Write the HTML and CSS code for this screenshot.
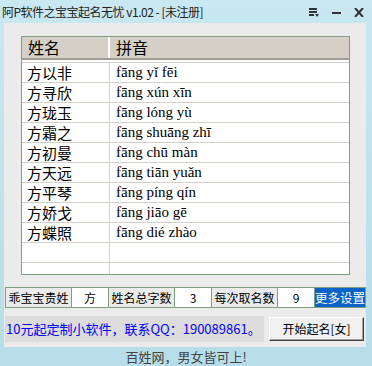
FILE: index.html
```html
<!DOCTYPE html>
<html lang="zh">
<head>
    <meta charset="UTF-8">
    <title>阿P软件之宝宝起名无忧</title>
    <link rel="stylesheet" href="styles.css">
</head>
<body>
    <div class="window">
        <div class="titlebar">
            <span class="title">阿P软件之宝宝起名无忧 v1.02 - [未注册]</span>
            <div class="controls">
                <svg width="10" height="9" viewBox="0 0 10 9"><path d="M0 1h8M0 4h8M0 7h5" stroke="#333" stroke-width="2"/><path d="M6 6h4l-2 3z" fill="#333"/></svg>
                <svg width="9" height="9" viewBox="0 0 9 9"><path d="M0 5h9" stroke="#333" stroke-width="2"/></svg>
                <svg width="10" height="9" viewBox="0 0 10 9"><path d="M1 0l8 9M9 0l-8 9" stroke="#333" stroke-width="2"/></svg>
            </div>
        </div>

        <div class="panel">
            <div class="list">
                <div class="list-head">
                    <div class="col-name">姓名</div>
                    <div class="col-py">拼音</div>
                </div>
                <div class="list-body" id="rows"></div>
            </div>

            <div class="fields">
                <div class="label">乖宝宝贵姓</div>
                <div class="value">方</div>
                <div class="label">姓名总字数</div>
                <div class="value">3</div>
                <div class="label">每次取名数</div>
                <div class="value">9</div>
                <div class="more">更多设置</div>
            </div>

            <div class="actions">
                <div class="ad">10元起定制小软件，联系QQ：190089861。</div>
                <button class="start">开始起名[女]</button>
            </div>
        </div>

        <div class="footer">百姓网，男女皆可上!</div>
    </div>

    <script>
        const names = [
            ["方以非", "fāng yǐ fēi"],
            ["方寻欣", "fāng xún xīn"],
            ["方珑玉", "fāng lóng yù"],
            ["方霜之", "fāng shuāng zhī"],
            ["方初曼", "fāng chū màn"],
            ["方天远", "fāng tiān yuǎn"],
            ["方平琴", "fāng píng qín"],
            ["方娇戈", "fāng jiāo gē"],
            ["方蝶照", "fāng dié zhào"],
            ["", ""],
            ["", ""]
        ];
        let html = "";
        names.forEach(n => {
            html += `<div class="row"><div class="col-name">${n[0]}</div><div class="col-py">${n[1]}</div></div>`;
        });
        document.getElementById("rows").innerHTML = html;
    </script>
</body>
</html>
```

FILE: styles.css
```css
body {
    margin: 0;
    font-family: "Noto Sans CJK SC", sans-serif;
}
.window {
    width: 372px;
    height: 366px;
    background: linear-gradient(#c9e8f1, #b6dde9);
    display: flex;
    flex-direction: column;
    overflow: hidden;
}
.titlebar {
    height: 23px;
    display: flex;
    align-items: center;
    justify-content: space-between;
    padding: 0 8px 0 2px;
}
.title {
    font-size: 12px;
    color: #222;
    letter-spacing: -0.5px;
    white-space: nowrap;
}
.controls {
    display: flex;
    gap: 13px;
    align-items: center;
    margin-top: 2px;
}
.panel {
    margin: 0 6px 0 4px;
    background-color: #ebebeb;
    height: 326px;
    padding: 13px 0 0 1px;
    box-sizing: border-box;
}
.list {
    margin-left: 16px;
    width: 329px;
    height: 239px;
    border: 1px solid #7f9f7f;
    box-sizing: border-box;
    background-color: #fff;
    overflow: hidden;
}
.list-head {
    display: flex;
    height: 23px;
    background-color: #d4d0c8;
    border-bottom: 2px solid #a09c94;
    box-sizing: border-box;
}
.list-head .col-name {
    border-right: 2px solid #fff;
}
.list-head div {
    font-size: 16px;
    line-height: 21px;
    padding-left: 6px;
}
.col-name {
    width: 88px;
    box-sizing: border-box;
    white-space: nowrap;
}
.col-py {
    flex: 1;
    white-space: nowrap;
}
.list-body {
    border-top: 2px solid #fff;
}
.row {
    display: flex;
    height: 20px;
    border-top: 1px solid #d4d0c8;
    box-sizing: border-box;
}
.row .col-name {
    border-right: 1px solid #d4d0c8;
    font-size: 15px;
    line-height: 19px;
    padding-left: 5px;
}
.row .col-py {
    font-family: "Liberation Serif", serif;
    font-size: 15px;
    line-height: 19px;
    padding-left: 6px;
}
.fields {
    display: flex;
    margin-top: 12px;
    height: 21px;
    border: 1px solid #7f9f7f;
    box-sizing: border-box;
    font-size: 12px;
}
.fields div {
    line-height: 19px;
    text-align: center;
    white-space: nowrap;
    border-right: 1px solid #7f9f7f;
}
.label {
    width: 65px;
}
.value {
    width: 36px;
    background-color: #fff;
}
.fields .more {
    flex: 1;
    border-right: none;
    background-color: #0a64c8;
    color: #fff;
    font-size: 12.5px;
}
.actions {
    display: flex;
    margin-top: 8px;
    gap: 5px;
    align-items: center;
}
.ad {
    width: 259px;
    height: 26px;
    background-color: #dcdcdc;
    color: #0000ff;
    font-size: 13px;
    line-height: 26px;
    padding-left: 1px;
    box-sizing: border-box;
    white-space: nowrap;
}
.start {
    width: 95px;
    height: 24px;
    font-family: "Noto Sans CJK SC", sans-serif;
    font-size: 12px;
    padding: 0;
    background-color: #f0f0f0;
    border: 1px solid #fff;
    border-right-color: #404040;
    border-bottom-color: #404040;
    box-shadow: inset -1px -1px 0 #a0a0a0;
}
.footer {
    flex: 1;
    text-align: center;
    font-size: 13px;
    color: #444;
    line-height: 18px;
    padding-top: 1px;
}
```
